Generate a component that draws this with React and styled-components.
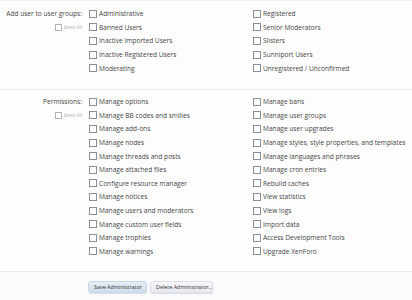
import React from "react";
import styled, { createGlobalStyle } from "styled-components";

const Global = createGlobalStyle`
  html, body { margin: 0; padding: 0; background: #ffffff; }
  body { font-family: "Open Sans", "DejaVu Sans", sans-serif; color: #444; }
`;

const ROW = 13.6;

const Page = styled.form`
  width: 412px;
  height: 300px;
  overflow: hidden;
  background: #fdfdfe;
  border-top: 1px solid #eef0f4;
  box-sizing: border-box;
`;

const Section = styled.div`
  display: grid;
  grid-template-columns: 82px 328px;
  column-gap: 7px;
  padding: ${(p) => p.$pt}px 0 ${(p) => p.$pb}px;
  border-bottom: 1px solid #e9ebf0;
`;

const LabelCol = styled.div`
  display: flex;
  flex-direction: column;
  align-items: flex-end;
`;

const Label = styled.div`
  height: ${ROW}px;
  line-height: ${ROW}px;
  font-size: 6.6px;
  color: #454545;
  white-space: nowrap;
`;

const SelectAll = styled.label`
  display: flex;
  align-items: center;
  gap: 2px;
  height: ${ROW}px;
  font-size: 4.4px;
  color: #b0b0b8;
`;

const SmallBox = styled.span`
  width: 5px;
  height: 5px;
  border: 1px solid #b4b4bc;
  background: #fff;
`;

const Grid = styled.div`
  display: grid;
  grid-template-columns: 164px 164px;
`;

const List = styled.div`
  display: flex;
  flex-direction: column;
`;

const Item = styled.label`
  display: flex;
  align-items: center;
  gap: 2px;
  height: ${ROW}px;
  flex: none;
  font-size: 6.6px;
  color: #454545;
  white-space: nowrap;
`;

const Box = styled.span`
  width: 6px;
  height: 6px;
  border: 1px solid #8e8e96;
  background: #fff;
  flex: none;
`;

const Buttons = styled.div`
  display: flex;
  gap: 3px;
  padding: 9px 0 0 88px;
  background: #fbfbfd;
  height: 40px;
`;

const Button = styled.button`
  height: 12px;
  padding: 0 5px;
  border: 1px solid ${(p) => (p.$primary ? "#c9d8e6" : "#dedfe8")};
  border-radius: 3px;
  background: ${(p) =>
    p.$primary
      ? "linear-gradient(#e6eef6, #cfdeeb)"
      : "linear-gradient(#f6f6fa, #e8e8f1)"};
  box-shadow: 0 1px 1px rgba(120, 130, 150, 0.25);
  font-family: "Open Sans", "DejaVu Sans", sans-serif;
  font-size: 5.4px;
  color: #333;
  width: ${(p) => p.$w}px;
  white-space: nowrap;
`;

const groupsLeft = [
  "Administrative",
  "Banned Users",
  "Inactive Imported Users",
  "Inactive Registered Users",
  "Moderating",
];
const groupsRight = [
  "Registered",
  "Senior Moderators",
  "Slisters",
  "Sunniport Users",
  "Unregistered / Unconfirmed",
];
const permsLeft = [
  "Manage options",
  "Manage BB codes and smilies",
  "Manage add-ons",
  "Manage nodes",
  "Manage threads and posts",
  "Manage attached files",
  "Configure resource manager",
  "Manage notices",
  "Manage users and moderators",
  "Manage custom user fields",
  "Manage trophies",
  "Manage warnings",
];
const permsRight = [
  "Manage bans",
  "Manage user groups",
  "Manage user upgrades",
  "Manage styles, style properties, and templates",
  "Manage languages and phrases",
  "Manage cron entries",
  "Rebuild caches",
  "View statistics",
  "View logs",
  "Import data",
  "Access Development Tools",
  "Upgrade XenForo",
];

const CheckList = ({ items }) => (
  <List>
    {items.map((t) => (
      <Item key={t}>
        <Box />
        {t}
      </Item>
    ))}
  </List>
);

const Block = ({ label, left, right, pt, pb }) => (
  <Section $pt={pt} $pb={pb}>
    <LabelCol>
      <Label>{label}</Label>
      <SelectAll>
        <SmallBox />
        Select All
      </SelectAll>
    </LabelCol>
    <Grid>
      <CheckList items={left} />
      <CheckList items={right} />
    </Grid>
  </Section>
);

export default function App() {
  return (
    <>
      <Global />
      <Page>
        <Block label="Add user to user groups:" left={groupsLeft} right={groupsRight} pt={6} pb={14} />
        <Block label="Permissions:" left={permsLeft} right={permsRight} pt={5} pb={12.5} />
        <Buttons>
          <Button type="button" $primary $w={59}>Save Administrator</Button>
          <Button type="button" $w={63}>Delete Administrator...</Button>
        </Buttons>
      </Page>
    </>
  );
}
